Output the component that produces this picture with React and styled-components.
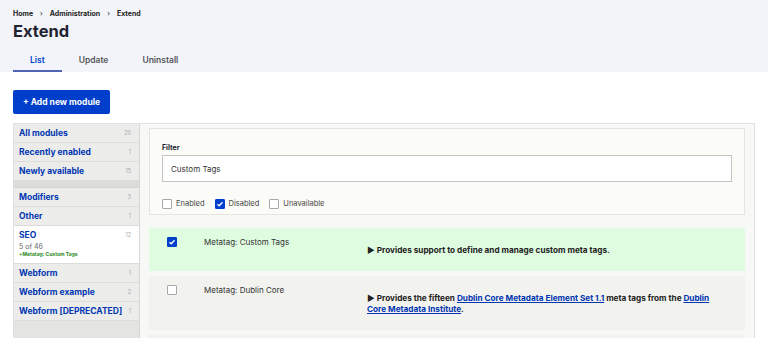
import React from 'react'
import styled, { createGlobalStyle } from 'styled-components'

const Global = createGlobalStyle`
  body{
    margin:0;
    background:#fff;
    font-family:Inter, "Liberation Sans", sans-serif;
    color:#222330;
  }
`

const Header = styled.div`
  background:#f3f4f9;
  padding:9px 13px 0;
`
const Crumbs = styled.div`
  font-size:7px;
  line-height:9px;
  font-weight:700;
  display:flex;
  gap:7px;
  color:#222;
  span.sep{ font-weight:400; }
`
const Title = styled.h1`
  margin:2px 0 0;
  font-size:16.5px;
  font-weight:700;
  line-height:22px;
`
const Tabs = styled.div`
  display:flex;
  margin-top:9px;
`
const Tab = styled.div`
  padding:0 17px;
  font-size:8.5px;
  font-weight:600;
  height:19px;
  line-height:19px;
  color:${({active})=> active ? '#003ecc' : '#55565b'};
  border-bottom:2px solid ${({active})=> active ? '#5064b5' : 'transparent'};
`
const Page = styled.div`
  padding:18px 13px 0;
`
const AddButton = styled.button`
  display:block;
  background:#003ecc;
  color:#fff;
  border:0;
  border-radius:2px;
  height:24px;
  width:97px;
  font-family:inherit;
  font-size:8.5px;
  font-weight:700;
  padding:0;
`
const Layout = styled.div`
  margin-top:9px;
  display:grid;
  grid-template-columns:126px 1fr;
  border:1px solid #e0e0de;
  border-bottom:0;
  height:220px;
`
const Side = styled.div`
  background:#e4e4e3;
  border-right:1px solid #d6d6d4;
  display:flex;
  flex-direction:column;
`
const SideItem = styled.div`
  background:${({current})=> current ? '#fff' : '#ececeb'};
  border-bottom:1px solid #dcdcda;
  display:flex;
  justify-content:space-between;
  font-size:8.5px;
  line-height:11px;
  padding:${({current})=> current ? '4px 5px 6px' : '0 5px'};
  height:${({current})=> current ? 'auto' : '18px'};
  align-items:${({current})=> current ? 'flex-start' : 'center'};
  .name{
    font-weight:700;
    color:#0036b1;
  }
  .count{
    font-size:5.5px;
    color:#a8a8a8;
    margin-right:3px;
  }
`
const SideGap = styled.div`
  height:6px;
  background:#dcdcdb;
  border-bottom:1px solid #d4d4d2;
`
const SeoMeta = styled.div`
  font-size:7px;
  color:#666;
  margin-top:1px;
  line-height:9px;
  b{
    display:block;
    color:#2a8a20;
    font-size:5px;
    line-height:6px;
  }
`
const Content = styled.div`
  background:#f8f8f6;
  padding:4px 9px 0;
  overflow:hidden;
`
const FilterBox = styled.div`
  background:#fbfbf8;
  border:1px solid #e4e4e1;
  padding:14px 12px 5px;
`
const Label = styled.div`
  font-size:7px;
  line-height:9px;
  font-weight:700;
  margin-bottom:3px;
`
const Input = styled.div`
  background:#fff;
  border:1px solid #c4c4c4;
  height:25px;
  display:flex;
  align-items:center;
  padding:0 8px;
  font-size:8px;
  color:#333;
`
const Checks = styled.div`
  display:flex;
  gap:10px;
  margin-top:16px;
`
const Check = styled.label`
  display:flex;
  align-items:center;
  gap:4px;
  font-size:7.5px;
  line-height:11px;
  color:#444;
`
const Box = styled.span`
  width:10px;
  height:10px;
  box-sizing:border-box;
  border:1px solid ${({checked})=> checked ? '#003ecc' : '#a8a8a8'};
  background:${({checked})=> checked ? '#003ecc' : '#fff'};
  border-radius:1px;
  display:inline-flex;
  align-items:center;
  justify-content:center;
`
const Rows = styled.div`
  margin-top:13px;
  display:flex;
  flex-direction:column;
  gap:5px;
`
const Row = styled.div`
  background:${({on})=> on ? '#e0fce0' : '#f2f2ef'};
  display:grid;
  grid-template-columns:55px 163px 1fr;
  align-items:start;
  padding:9px 0 0;
  height:${({h})=> h}px;
  box-sizing:border-box;
`
const RowCheck = styled.div`
  display:flex;
  padding-left:18px;
`
const RowName = styled.div`
  font-size:8px;
  line-height:11px;
  color:#333;
`
const RowDesc = styled.div`
  font-size:8.2px;
  font-weight:700;
  line-height:11px;
  padding-top:8px;
  padding-right:30px;
  color:#222;
  a{ color:#0036b1; }
`

const Tick = () => (
  <svg width="8" height="8" viewBox="0 0 8 8">
    <path d="M1.5 4.2 L3.2 5.8 L6.5 2.2" fill="none" stroke="#fff" strokeWidth="1.3" />
  </svg>
)

const CheckBox = ({checked}) => <Box checked={checked}>{checked && <Tick />}</Box>

const sideTop = [
  ['All modules', 20],
  ['Recently enabled', 1],
  ['Newly available', 15],
]
const sideMid = [
  ['Modifiers', 3],
  ['Other', 1],
]
const sideBottom = [
  ['Webform', 1],
  ['Webform example', 2],
  ['Webform [DEPRECATED]', 1],
]

export default function App(){
  return (
    <>
      <Global />
      <Header>
        <Crumbs>
          <span>Home</span><span className="sep">›</span>
          <span>Administration</span><span className="sep">›</span>
          <span>Extend</span>
        </Crumbs>
        <Title>Extend</Title>
        <Tabs>
          <Tab active>List</Tab>
          <Tab>Update</Tab>
          <Tab>Uninstall</Tab>
        </Tabs>
      </Header>
      <Page>
        <AddButton>+ Add new module</AddButton>
        <Layout>
          <Side>
            {sideTop.map(([n,c])=>(
              <SideItem key={n}><span className="name">{n}</span><span className="count">{c}</span></SideItem>
            ))}
            <SideGap />
            {sideMid.map(([n,c])=>(
              <SideItem key={n}><span className="name">{n}</span><span className="count">{c}</span></SideItem>
            ))}
            <SideItem current>
              <div>
                <span className="name">SEO</span>
                <SeoMeta>5 of 46<b>+Metatag: Custom Tags</b></SeoMeta>
              </div>
              <span className="count">12</span>
            </SideItem>
            {sideBottom.map(([n,c])=>(
              <SideItem key={n}><span className="name">{n}</span><span className="count">{c}</span></SideItem>
            ))}
          </Side>
          <Content>
            <FilterBox>
              <Label>Filter</Label>
              <Input>Custom Tags</Input>
              <Checks>
                <Check><CheckBox />Enabled</Check>
                <Check><CheckBox checked />Disabled</Check>
                <Check><CheckBox />Unavailable</Check>
              </Checks>
            </FilterBox>
            <Rows>
              <Row on h={43}>
                <RowCheck><CheckBox checked /></RowCheck>
                <RowName>Metatag: Custom Tags</RowName>
                <RowDesc>► Provides support to define and manage custom meta tags.</RowDesc>
              </Row>
              <Row h={54}>
                <RowCheck><CheckBox /></RowCheck>
                <RowName>Metatag: Dublin Core</RowName>
                <RowDesc>► Provides the fifteen <a href="#">Dublin Core Metadata Element Set 1.1</a> meta tags from the <a href="#">Dublin Core Metadata Institute</a>.</RowDesc>
              </Row>
              <Row h={30} />
            </Rows>
          </Content>
        </Layout>
      </Page>
    </>
  )
}
